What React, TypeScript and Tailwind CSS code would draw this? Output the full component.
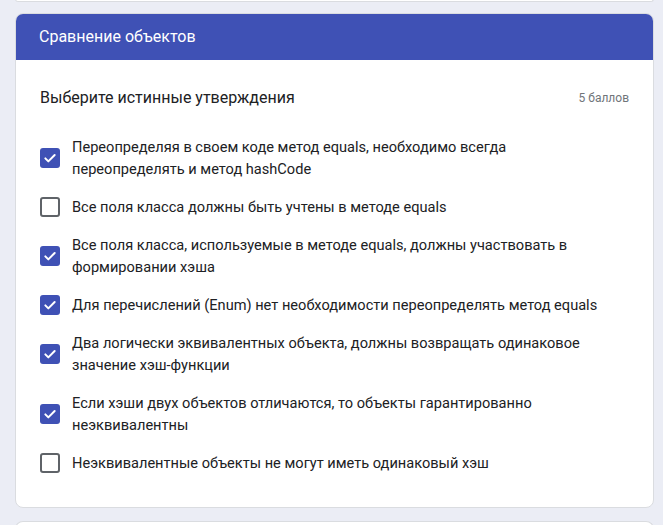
const items = [
  { text: "Переопределяя в своем коде метод equals, необходимо всегда переопределять и метод hashCode", checked: true },
  { text: "Все поля класса должны быть учтены в методе equals", checked: false },
  { text: "Все поля класса, используемые в методе equals, должны участвовать в формировании хэша", checked: true },
  { text: "Для перечислений (Enum) нет необходимости переопределять метод equals", checked: true },
  { text: "Два логически эквивалентных объекта, должны возвращать одинаковое значение хэш-функции", checked: true },
  { text: "Если хэши двух объектов отличаются, то объекты гарантированно неэквивалентны", checked: true },
  { text: "Неэквивалентные объекты не могут иметь одинаковый хэш", checked: false },
]

function Checkbox({ checked }: { checked: boolean }) {
  if (checked) {
    return (
      <div className="w-5 h-5 shrink-0 rounded-[3px] bg-[#3f51b5] flex items-center justify-center">
        <svg viewBox="0 0 24 24" className="w-4 h-4" fill="none" stroke="white" strokeWidth="3" strokeLinecap="round" strokeLinejoin="round">
          <path d="M5 12.5l4.5 4.5L19 7.5" />
        </svg>
      </div>
    )
  }
  return <div className="w-5 h-5 shrink-0 rounded-[3px] border-2 border-[#5f6368] bg-white" />
}

export default function App() {
  return (
    <div className="bg-[#ebedf5] pl-[15px] pr-[9px] font-['Roboto',sans-serif] text-[#202124] overflow-hidden h-[525px]">
      {/* previous card */}
      <div className="h-[3px] -mt-px bg-white border border-t-0 border-[#dadce0] rounded-b-lg" />

      {/* main card */}
      <div className="mt-[11px] bg-white rounded-lg border border-[#dadce0] overflow-hidden">
        <div className="h-[47px] bg-[#3f51b5] flex items-center px-6 -mx-px -mt-px">
          <h2 className="text-white text-[16px]">Сравнение объектов</h2>
        </div>
        <div className="pl-6 pr-6 pt-[26px] pb-[33px]">
          <div className="flex items-center justify-between h-6">
            <span className="text-[16px]">Выберите истинные утверждения</span>
            <span className="text-[12px] text-[#70757a]">5 баллов</span>
          </div>
          <div className="mt-[26px] flex flex-col gap-4">
            {items.map((it) => (
              <div key={it.text} className="flex items-center gap-3">
                <Checkbox checked={it.checked} />
                <p className="text-[14.6px] leading-[22px] max-w-[532px]">{it.text}</p>
              </div>
            ))}
          </div>
        </div>
      </div>

      {/* next card */}
      <div className="mt-[13px] h-[20px] bg-white rounded-t-lg border border-b-0 border-[#dadce0]" />
    </div>
  )
}
